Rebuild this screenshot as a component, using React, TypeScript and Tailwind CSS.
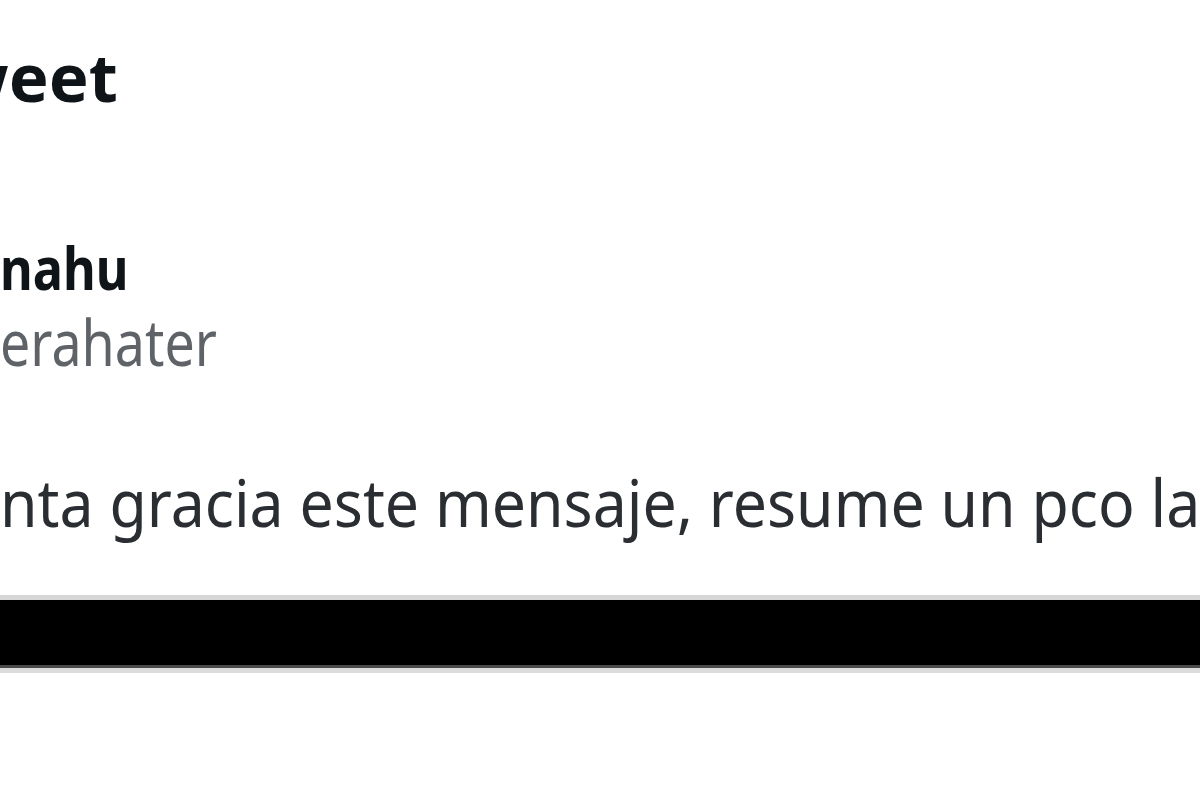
import React from "react";

export default function App() {
  return (
    <div
      className="w-[1200px] h-[800px] bg-white overflow-hidden flex flex-col"
      style={{ fontFamily: '"Noto Sans", "Open Sans", Roboto, sans-serif' }}
    >
      <div className="mt-[43px] h-[67px] whitespace-nowrap">
        <span className="block ml-[-86px] text-[67px] leading-none font-bold text-[#0f1419]">
          Tweet
        </span>
      </div>
      <div className="mt-[127px] h-[60px] whitespace-nowrap">
        <span className="block origin-left scale-x-[0.84] text-[60px] leading-none font-bold text-[#0f1419]">
          nahu
        </span>
      </div>
      <div className="mt-[13px] h-[64px] whitespace-nowrap">
        <span className="block origin-left scale-x-[0.84] text-[64px] leading-none text-[#5f6368]">
          erahater
        </span>
      </div>
      <div className="mt-[96px] h-[65px] whitespace-nowrap">
        <span className="block origin-left scale-x-[0.935] text-[65px] leading-none text-[#2a2d31]">
          nta gracia este mensaje, resume un pco la
        </span>
      </div>
      <div className="mt-[60px] flex flex-col">
        <div className="h-[5px] bg-[#d6d6d6]" />
        <div className="h-[65px] bg-black" />
        <div className="h-[3px] bg-[#4a4a4a]" />
        <div className="h-[5px] bg-[#dcdcdc]" />
      </div>
    </div>
  );
}
